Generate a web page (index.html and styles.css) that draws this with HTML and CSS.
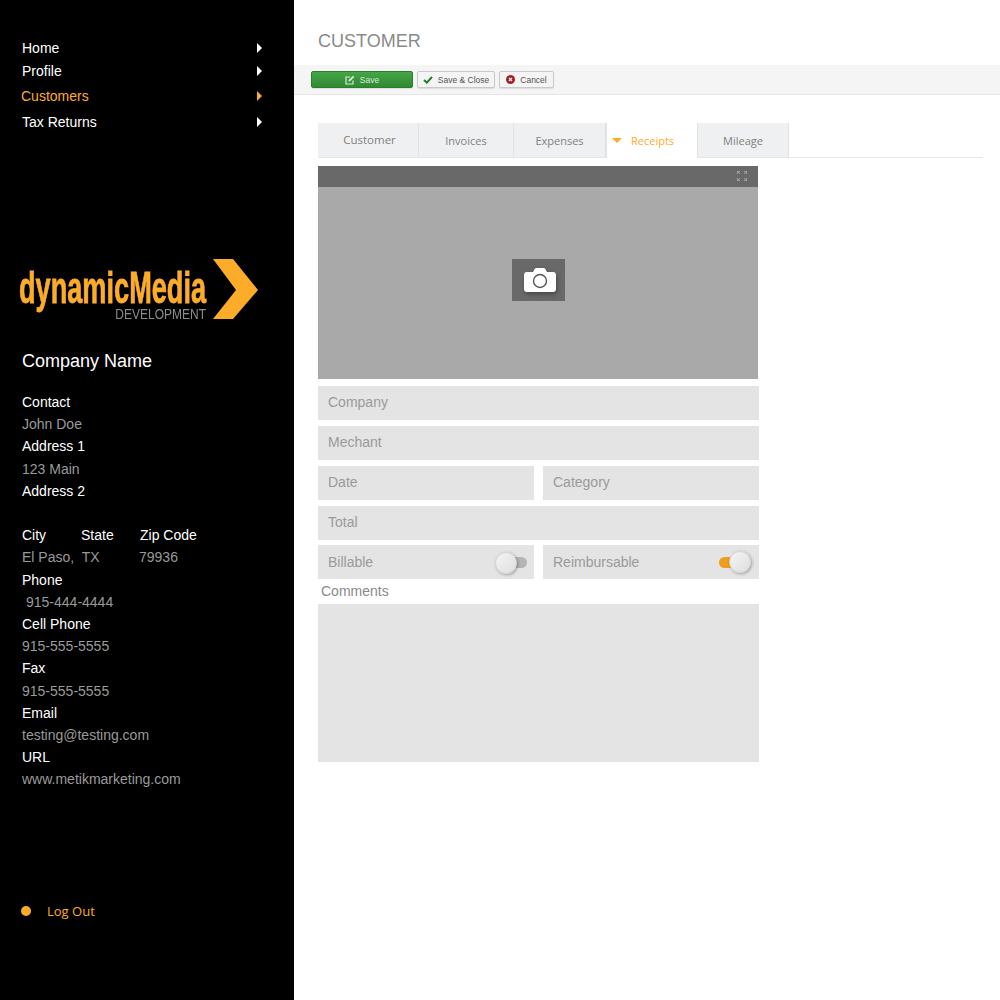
FILE: index.html
```html
<!DOCTYPE html>
<html lang="en">

<head>
    <meta charset="UTF-8">
    <title>Customer</title>
    <link rel="stylesheet" href="styles.css">
</head>

<body>
    <div class="sidebar">
        <ul class="nav">
            <li class="nav-home">Home<span class="arrow"></span></li>
            <li class="nav-profile">Profile<span class="arrow"></span></li>
            <li class="nav-customers">Customers<span class="arrow"></span></li>
            <li class="nav-tax">Tax Returns<span class="arrow"></span></li>
        </ul>

        <div class="logo">
            <div class="logo-text">
                <div class="logo-main">dynamicMedia</div>
                <div class="logo-sub">DEVELOPMENT</div>
            </div>
            <svg class="logo-chevron" width="46" height="60" viewBox="0 0 46 60">
                <polygon points="0,0 20,0 45,31 20,60 0,60 23,31" fill="#fdac2a" />
            </svg>
        </div>

        <div class="company">Company Name</div>

        <div class="details">
            <div class="label">Contact</div>
            <div class="value">John Doe</div>
            <div class="label">Address 1</div>
            <div class="value">123 Main</div>
            <div class="label">Address 2</div>
            <div class="spacer"></div>
            <div class="label city-row"><span>City</span><span>State</span><span>Zip Code</span></div>
            <div class="value state-row"><span>El Paso,&nbsp; TX</span><span>79936</span></div>
            <div class="label">Phone</div>
            <div class="value phone">915-444-4444</div>
            <div class="label">Cell Phone</div>
            <div class="value">915-555-5555</div>
            <div class="label">Fax</div>
            <div class="value">915-555-5555</div>
            <div class="label">Email</div>
            <div class="value">testing@testing.com</div>
            <div class="label">URL</div>
            <div class="value">www.metikmarketing.com</div>
        </div>

        <div class="logout"><span class="dot"></span>Log Out</div>
    </div>

    <div class="main">
        <h1 class="title">CUSTOMER</h1>

        <div class="toolbar">
            <button class="btn btn-save">
                <svg width="10" height="10" viewBox="0 0 10 10" fill="none" stroke="#d5ead5" stroke-width="1.2">
                    <path d="M8 5.5V9H1V2h4" />
                    <path d="M3.8 6.2l.3-1.5L8 1l1 1-3.8 3.9z" fill="#d5ead5" stroke-width=".6" />
                </svg>
                Save
            </button>
            <button class="btn btn-close">
                <svg width="10" height="8" viewBox="0 0 10 8" fill="none" stroke="#2a7d2a" stroke-width="2">
                    <path d="M1 4l2.8 2.6L9 1" />
                </svg>
                Save &amp; Close
            </button>
            <button class="btn btn-cancel">
                <svg width="9" height="9" viewBox="0 0 9 9">
                    <circle cx="4.5" cy="4.5" r="4.5" fill="#a51f24" />
                    <path d="M3 3l3 3M6 3L3 6" stroke="#fff" stroke-width="1.2" />
                </svg>
                Cancel
            </button>
        </div>

        <div class="content">
            <div class="tabs">
                <div class="tab tab-customer">Customer</div>
                <div class="tab tab-invoices">Invoices</div>
                <div class="tab tab-expenses">Expenses</div>
                <div class="tab tab-receipts"><span class="caret"></span>Receipts</div>
                <div class="tab tab-mileage">Mileage</div>
            </div>

            <div class="form">
                <div class="photo">
                    <div class="photo-head">
                        <svg width="10" height="10" viewBox="0 0 10 10" fill="none" stroke="#a0a0a0" stroke-width="1">
                            <path d="M.5 3V.5H3l0 0M.5.5l2.500 2.500M7 .5h2.500V3M9.500.5L7 3M9.500 7v2.500H7M9.500 9.500L7 7M3 9.500H.5V7M.5 9.500L3 7" />
                        </svg>
                    </div>
                    <div class="photo-body">
                        <div class="camera">
                            <svg class="camera-icon" width="34" height="27" viewBox="0 0 34 27">
                                <path d="M4 5h6l2-3.500Q12.500 1 13.500 1h7q1 0 1.500.5L24 5h6q3 0 3 3v14q0 3-3 3H4q-3 0-3-3V8q0-3 3-3z" fill="#fff" />
                                <circle cx="17" cy="14" r="6.500" fill="none" stroke="#555" stroke-width="1.400" />
                            </svg>
                        </div>
                    </div>
                </div>

                <div class="field">Company</div>
                <div class="field">Mechant</div>
                <div class="field-row">
                    <div class="field">Date</div>
                    <div class="field">Category</div>
                </div>
                <div class="field">Total</div>
                <div class="field-row toggles">
                    <div class="field">Billable
                        <span class="toggle"><span class="knob"></span></span>
                    </div>
                    <div class="field">Reimbursable
                        <span class="toggle on"><span class="knob"></span></span>
                    </div>
                </div>
                <div class="comments-label">Comments</div>
                <div class="comments"></div>
            </div>
        </div>
    </div>
</body>

</html>
```

FILE: styles.css
```css
* {
    margin: 0;
    padding: 0;
    box-sizing: border-box;
}

body {
    display: flex;
    min-height: 1000px;
    font-family: "Liberation Sans", Arial, sans-serif;
    background-color: #fff;
}

.sidebar {
    width: 294px;
    flex-shrink: 0;
    padding-top: 36px;
    background-color: #000;
    color: #fff;
    font-size: 14px;
}

.nav {
    list-style: none;
}

.nav li {
    display: flex;
    align-items: center;
    justify-content: space-between;
    padding: 0 32px 0 22px;
}

.nav-home {
    height: 24px;
}

.nav-profile {
    height: 22px;
}

.nav li.nav-customers {
    height: 27px;
    padding-left: 21px;
    color: #fdac2a;
}

.nav-tax {
    height: 26px;
}

.arrow {
    width: 0;
    height: 0;
    border-left: 5px solid currentColor;
    border-top: 5px solid transparent;
    border-bottom: 5px solid transparent;
}

.logo {
    display: flex;
    margin: 124px 0 0 19px;
}

.logo-text {
    width: 194px;
    padding-top: 10px;
}

.logo-main {
    width: 187px;
    height: 38px;
    font-size: 44px;
    line-height: 38px;
    font-weight: bold;
    color: #fdac2a;
    white-space: nowrap;
    -webkit-text-stroke: 0.8px #fdac2a;
    transform: scaleX(0.617);
    transform-origin: left top;
}

.logo-sub {
    width: 187px;
    font-size: 15px;
    line-height: 13px;
    color: #8c8c8c;
    text-align: right;
    white-space: nowrap;
    transform: scaleX(0.8);
    transform-origin: right top;
}

.company {
    margin: 29px 0 0 22px;
    font-size: 18px;
    line-height: 24px;
}

.details {
    margin: 18px 0 0 22px;
    line-height: 22.2px;
}

.label {
    color: #fff;
}

.value {
    color: #9a9a9a;
}

.spacer {
    height: 22.2px;
}

.city-row {
    display: grid;
    grid-template-columns: 59px 59px auto;
}

.state-row {
    display: grid;
    grid-template-columns: 117px auto;
}

.phone {
    padding-left: 4px;
}

.logout {
    display: flex;
    align-items: center;
    height: 20px;
    margin: 110px 0 0 21px;
    font-family: "Open Sans", sans-serif;
    font-size: 13px;
    color: #fdac2a;
}

.dot {
    width: 10px;
    height: 10px;
    margin-right: 16px;
    border-radius: 50%;
    background-color: #fdac2a;
}

.main {
    flex: 1;
    padding-top: 29px;
}

.title {
    margin-left: 24px;
    font-size: 18px;
    line-height: 24px;
    font-weight: normal;
    color: #8a8a8a;
}

.toolbar {
    display: flex;
    gap: 4px;
    height: 30px;
    margin-top: 12px;
    padding: 6px 0 0 17px;
    background-color: #f5f5f5;
    border-bottom: 1px solid #e6e6e6;
}

.btn {
    display: flex;
    align-items: center;
    justify-content: center;
    gap: 5px;
    height: 17px;
    font-family: "Liberation Sans", Arial, sans-serif;
    font-size: 8.500px;
    color: #555;
    background-color: #f4f4f4;
    border: 1px solid #c9c9c9;
    border-radius: 2px;
    box-shadow: 0 1px 1px rgba(0, 0, 0, 0.1);
}

.btn-save {
    width: 102px;
    color: #d5ead5;
    background: linear-gradient(#47a447, #2f8a32);
    border-color: #2a7d2a;
}

.btn-close {
    width: 78px;
}

.btn-cancel {
    width: 55px;
}

.content {
    padding: 28px 17px 0 24px;
}

.tabs {
    display: flex;
    height: 35px;
    border-bottom: 1px solid #e6e6e6;
}

.tab {
    display: flex;
    align-items: center;
    justify-content: center;
    height: 35px;
    font-family: "Open Sans", sans-serif;
    font-size: 11px;
    color: #808080;
    background-color: #eff0f2;
    border-right: 1px solid #e2e3e5;
    border-bottom: 1px solid #e6e6e6;
}

.tab-customer {
    width: 101px;
    padding: 0 0 2px 3px;
    font-size: 11.500px;
}

.tab-invoices {
    width: 95px;
}

.tab-expenses {
    width: 92px;
}

.tab-receipts {
    width: 92px;
    justify-content: flex-start;
    padding-left: 5px;
    color: #fdac2a;
    background-color: #fff;
    border-left: 1px solid #e2e3e5;
    border-bottom: none;
}

.tab-mileage {
    width: 91px;
}

.caret {
    width: 0;
    height: 0;
    margin-right: 9px;
    border-top: 5px solid #fdac2a;
    border-left: 5px solid transparent;
    border-right: 5px solid transparent;
}

.form {
    width: 441px;
    margin-top: 8px;
}

.photo {
    width: 440px;
}

.photo-head {
    display: flex;
    align-items: center;
    justify-content: flex-end;
    height: 21px;
    padding: 0 11px 1px 0;
    background-color: #696969;
}

.photo-body {
    display: flex;
    align-items: center;
    justify-content: center;
    height: 192px;
    padding-bottom: 6px;
    background-color: #a9a9a9;
}

.camera {
    display: flex;
    align-items: center;
    justify-content: center;
    width: 53px;
    height: 42px;
    padding-left: 4px;
    background-color: #696969;
}

.camera-icon {
    filter: drop-shadow(1px 2px 2px rgba(0, 0, 0, 0.35));
}

.field {
    display: flex;
    align-items: center;
    justify-content: space-between;
    height: 34px;
    padding: 0 10px 2px;
    font-size: 14px;
    color: #9a9a9a;
    background-color: #e4e4e4;
}

.photo + .field {
    margin-top: 7px;
}

.form > .field,
.field-row {
    margin-bottom: 6px;
}

.field-row {
    display: flex;
    justify-content: space-between;
}

.field-row .field {
    width: 216px;
}

.form > .field:nth-of-type(5) {
    margin-bottom: 5px;
}

.toggles {
    margin-bottom: 0;
}

.toggles .field {
    padding-bottom: 0;
}

.toggle {
    position: relative;
    width: 20px;
    height: 11px;
    margin-right: -3px;
    border-radius: 6px;
    background-color: #b5b5b5;
}

.knob {
    position: absolute;
    top: -5px;
    left: -12px;
    width: 22px;
    height: 22px;
    border-radius: 50%;
    background: linear-gradient(135deg, #f5f5f5, #dedede);
    border: 1px solid #d4d4d4;
    box-shadow: 1px 1px 3px rgba(0, 0, 0, 0.3);
}

.toggle.on {
    width: 22px;
    margin-right: 8px;
    background-color: #ef9d1e;
}

.toggle.on .knob {
    left: 10px;
    top: -6px;
}

.comments-label {
    height: 25px;
    padding-left: 3px;
    font-size: 14px;
    line-height: 25px;
    color: #8a8a8a;
}

.comments {
    height: 158px;
    background-color: #e4e4e4;
}
```
